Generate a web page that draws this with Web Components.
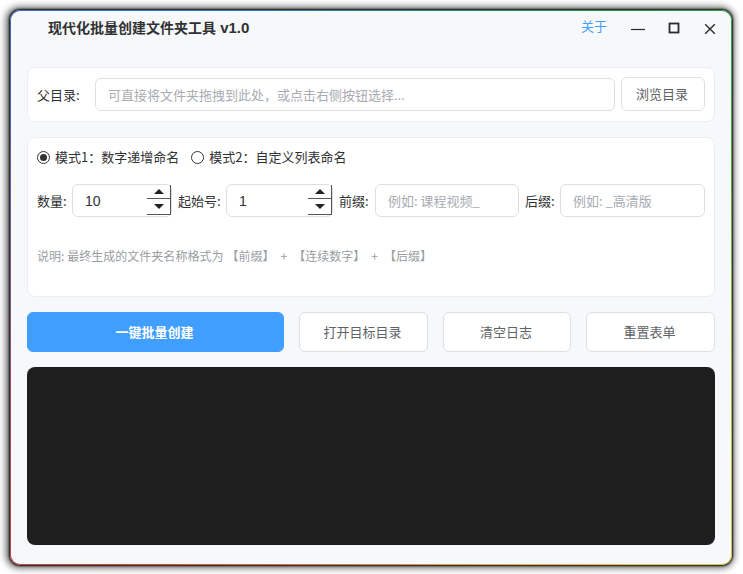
<!DOCTYPE html>
<html lang="zh"><head><meta charset="utf-8"><style>
html,body{margin:0;padding:0;background:#fff;width:743px;height:574px;overflow:hidden}
body{font-family:"Noto Sans CJK SC","Liberation Sans",sans-serif;font-size:13px;color:#303133}
</style></head><body>
<app-window>
  <title-bar slot="bar" title-text="现代化批量创建文件夹工具" version="v1.0"></title-bar>
  <ui-card pad="9px 9px 10px 9px">
    <ui-row gap="14px">
      <ui-label w="44px">父目录:</ui-label>
      <ui-field grow ph="可直接将文件夹拖拽到此处，或点击右侧按钮选择..."></ui-field>
      <ui-button w="84px" h="34px" style="margin-left:-8px">浏览目录</ui-button>
    </ui-row>
  </ui-card>
  <ui-card style="height:160px" pad="9px 9px 10px 9px">
    <ui-row gap="12px" style="height:20px;margin-bottom:17px">
      <ui-radio checked>模式1：数字递增命名</ui-radio>
      <ui-radio>模式2：自定义列表命名</ui-radio>
    </ui-row>
    <ui-row gap="6px">
      <ui-label w="29px">数量:</ui-label><ui-spin w="100px" value="10"></ui-spin>
      <ui-label w="42px">起始号:</ui-label><ui-spin w="107px" value="1"></ui-spin>
      <ui-label w="30px">前缀:</ui-label><ui-field w="144px" ph="例如: 课程视频_"></ui-field>
      <ui-label w="29px">后缀:</ui-label><ui-field grow ph="例如: _高清版"></ui-field>
    </ui-row>
    <p-note>说明: 最终生成的文件夹名称格式为 【前缀】  +  【连续数字】  +  【后缀】</p-note>
  </ui-card>
  <ui-row gap="15px" style="height:40px">
    <ui-button primary w="257px" h="40px">一键批量创建</ui-button>
    <ui-button w="129px" h="40px">打开目标目录</ui-button>
    <ui-button w="128px" h="40px">清空日志</ui-button>
    <ui-button w="129px" h="40px">重置表单</ui-button>
  </ui-row>
  <log-panel></log-panel>
</app-window>
<script>
function def(name, css, html){
  customElements.define(name, class extends HTMLElement{
    connectedCallback(){
      if(this.shadowRoot) return;
      const r=this.attachShadow({mode:'open'});
      r.innerHTML='<style>'+css+'</style>'+(typeof html==='function'?html(this):html);
    }
  });
}
def('app-window',`
 :host{display:block;position:absolute;left:10px;top:10px;width:722px;height:555px;box-sizing:border-box;border-radius:10px;padding:1px;
  background:conic-gradient(from 45deg,#1f9a4a 0deg,#e8c840 90deg,#d8403a 180deg,#2f6fd0 270deg,#1f9a4a 360deg);
  box-shadow:0 0 2px 1px rgba(0,0,0,.85),-1px 0 7px 3px rgba(0,0,0,.6)}
 .in{height:100%;box-sizing:border-box;border-radius:9px;background:#f7f8fa;display:flex;flex-direction:column}
 .main{flex:1;display:flex;flex-direction:column;gap:15px;padding:12px 16px 19px 16px;min-height:0}
`,`<div class="in"><slot name="bar"></slot><div class="main"><slot></slot></div></div>`);
def('title-bar',`
 :host{display:flex;align-items:center;height:44px;padding:0 15px 12px 37px;box-sizing:border-box;flex:none}
 .t{font-weight:700;font-size:14px;color:#303133;flex:1;line-height:20px;white-space:pre}
 .t b{font:700 15px "Liberation Sans",sans-serif;margin-left:1px}
 .a{color:#409eff;font-size:13px;margin-right:24px;margin-bottom:4px}
 svg{display:block;overflow:visible}
 .c{display:flex;align-items:center;margin-top:3px}
`,h=>`<span class="t">${h.getAttribute('title-text')} <b>${h.getAttribute('version')}</b></span><span class="a">关于</span>
 <span class="c"><svg width="14" height="12" viewBox="0 0 14 12"><path d="M0 6.5H14" stroke="#2b2b2b" stroke-width="1.2"/></svg>
 <svg style="margin-left:23px;margin-top:-1px" width="12" height="12" viewBox="0 0 12 12"><rect x="1.5" y="1.5" width="9" height="9" fill="none" stroke="#2b2b2b" stroke-width="1.8"/></svg>
 <svg style="margin-left:24px" width="12" height="12" viewBox="0 0 12 12"><path d="M1.2 1.2L10.8 10.8M10.8 1.2L1.2 10.8" stroke="#2b2b2b" stroke-width="1.4"/></svg></span>`);
def('ui-card',`:host{display:block;box-sizing:border-box;background:#fff;border:1px solid #ebeef5;border-radius:8px;flex:none}`,
 h=>`<div style="padding:${h.getAttribute('pad')}"><slot></slot></div>`);
def('ui-row',`:host{display:flex;align-items:center;flex:none}`,h=>{h.style.gap=h.getAttribute('gap');return '<slot></slot>'});
def('ui-label',`:host{display:block;flex:none;color:#303133;white-space:nowrap}`,h=>{h.style.width=h.getAttribute('w');return '<slot></slot>'});
def('ui-field',`:host{display:block;box-sizing:border-box;height:33px;border:1px solid #dcdfe6;border-radius:6px;background:#fff;color:#a8abb2;padding:0 12px;line-height:31px;white-space:nowrap;overflow:hidden;flex:none}
 :host([grow]){flex:1;min-width:0}`,h=>{if(h.getAttribute('w'))h.style.width=h.getAttribute('w');return `<span>${h.getAttribute('ph')}</span>`});
def('ui-button',`:host{display:flex;align-items:center;justify-content:center;box-sizing:border-box;border:1px solid #dcdfe6;border-radius:6px;background:#fff;color:#606266;flex:none;padding:0 2px 1px 0}
 :host([primary]){background:#409eff;border-color:#409eff;color:#fff;font-weight:700}`,h=>{h.style.width=h.getAttribute('w');h.style.height=h.getAttribute('h');return '<slot></slot>'});
def('ui-radio',`:host{display:inline-flex;align-items:center;gap:5px;color:#303133;padding-bottom:1px}
 .o{width:13px;height:13px;box-sizing:border-box;border:1.2px solid #333;border-radius:50%;background:#fff;display:flex;align-items:center;justify-content:center;margin-top:1px}
 .d{width:7px;height:7px;border-radius:50%;background:#333}`,h=>`<span class="o">${h.hasAttribute('checked')?'<span class="d"></span>':''}</span><slot></slot>`);
def('ui-spin',`:host{display:flex;box-sizing:border-box;height:33px;border:1px solid #dcdfe6;border-radius:6px;background:#fff;flex:none}
 .v{flex:1;padding-left:12px;line-height:33px;font-size:14px;color:#303133;font-family:"Liberation Sans",sans-serif}
 .btns{width:24px;height:30px;display:flex;flex-direction:column;border-right:1px solid #555;box-sizing:border-box}
 .u,.w{display:flex;align-items:center;justify-content:center;border-bottom:1px solid #555;box-sizing:border-box}
 .u{height:14px}.w{flex:1}
 svg{display:block}`,h=>{h.style.width=h.getAttribute('w');return `<span class="v">${h.getAttribute('value')}</span><div class="btns">
 <div class="u"><svg width="10" height="5"><path d="M5 0L10 5H0Z" fill="#222"/></svg></div>
 <div class="w"><svg width="10" height="5"><path d="M0 0H10L5 5Z" fill="#222"/></svg></div></div>`});
def('p-note',`:host{display:block;margin-top:31px;font-size:12px;color:#9a9da3;line-height:16px;white-space:pre;word-spacing:.35px}`,'<slot></slot>');
def('log-panel',`:host{display:block;flex:1;min-height:0;background:#1e1e1e;border-radius:8px}`,'');
</script>
</body></html>
